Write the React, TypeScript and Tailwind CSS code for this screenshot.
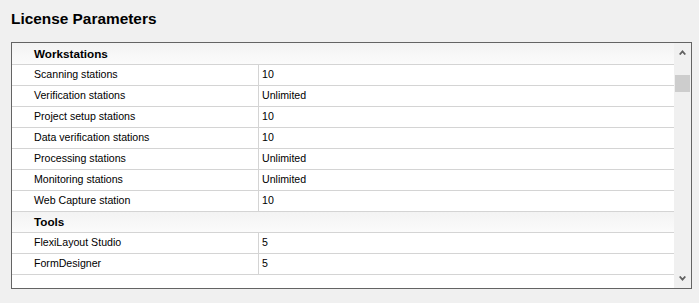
import React from "react";

type Row = { kind: "h"; label: string } | { kind: "r"; label: string; value: string };

const rows: Row[] = [
  { kind: "h", label: "Workstations" },
  { kind: "r", label: "Scanning stations", value: "10" },
  { kind: "r", label: "Verification stations", value: "Unlimited" },
  { kind: "r", label: "Project setup stations", value: "10" },
  { kind: "r", label: "Data verification stations", value: "10" },
  { kind: "r", label: "Processing stations", value: "Unlimited" },
  { kind: "r", label: "Monitoring stations", value: "Unlimited" },
  { kind: "r", label: "Web Capture station", value: "10" },
  { kind: "h", label: "Tools" },
  { kind: "r", label: "FlexiLayout Studio", value: "5" },
  { kind: "r", label: "FormDesigner", value: "5" },
];

export default function App() {
  return (
    <div
      className="w-[699px] h-[303px] bg-[#f0f0f0] px-[11px] pt-[10px] text-black"
      style={{ fontFamily: '"Liberation Sans", Arial, sans-serif' }}
    >
      <div className="text-[15.4px] leading-[17px] font-bold">License Parameters</div>
      <div className="mt-[15px] w-[681px] h-[247px] border border-[#646464] bg-white flex">
        <div className="w-[662px] flex flex-col">
          {rows.map((r, i) =>
            r.kind === "h" ? (
              <div
                key={i}
                className={`${i === 0 ? "h-[22px]" : "h-[21px]"} border-b border-[#d4d4d4] bg-gradient-to-b from-[#f3f3f3] to-[#fbfbfb] flex items-center pl-[22px] text-[11.7px] font-bold`}
              >
                {r.label}
              </div>
            ) : (
              <div key={i} className="h-[21px] border-b border-[#d4d4d4] flex text-[10.6px]">
                <div className="w-[247px] border-r border-[#d4d4d4] pl-[22px] flex items-center">
                  {r.label}
                </div>
                <div className="pl-[3px] flex items-center">{r.value}</div>
              </div>
            )
          )}
        </div>
        <div className="w-[17px] bg-[#f0f0f0] flex flex-col items-center">
          <div className="h-[17px] w-full flex items-center justify-center pt-[2px]">
            <svg width="7" height="5" viewBox="0 0 7 5">
              <path d="M0.7 4.5 L3.5 1.4 L6.3 4.5" fill="none" stroke="#606060" strokeWidth="1.8" />
            </svg>
          </div>
          <div className="mt-[15px] w-[15px] h-[17px] bg-[#cdcdcd]" />
          <div className="flex-1" />
          <div className="h-[17px] w-full flex items-center justify-center pb-[2px]">
            <svg width="7" height="5" viewBox="0 0 7 5">
              <path d="M0.7 0.5 L3.5 3.6 L6.3 0.5" fill="none" stroke="#606060" strokeWidth="1.8" />
            </svg>
          </div>
        </div>
      </div>
    </div>
  );
}
